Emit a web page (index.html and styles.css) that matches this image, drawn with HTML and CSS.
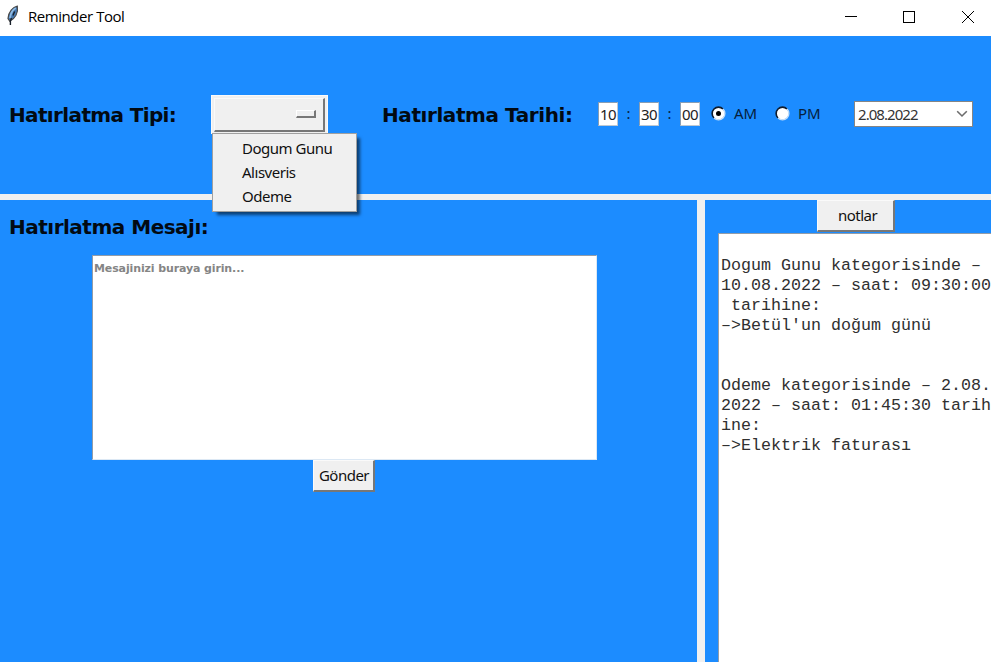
FILE: index.html
```html
<!DOCTYPE html>
<html lang="tr">
<head>
<meta charset="utf-8">
<title>Reminder Tool</title>
<link rel="stylesheet" href="styles.css">
</head>
<body>
<div class="window">
  <header class="titlebar">
    <svg class="feather" width="14" height="22" viewBox="0 0 14 22">
      <path d="M11.3 1.2C7 2 2.4 7 2 13.5L3.8 16.2C9 13.5 12.5 8 11.3 1.2Z" fill="#4678b0" stroke="#484848" stroke-width="1.2"/>
      <path d="M9.8 3C6.5 5 4.5 9 4 13" stroke="#8ebbe5" stroke-width="1.7" fill="none"/>
      <path d="M8.6 6.5L7 10.5M5.5 13L4.4 16V20" stroke="#18202a" stroke-width="1.4" fill="none"/>
    </svg>
    <span class="title">Reminder Tool</span>
    <svg class="controls" width="130" height="14" viewBox="0 0 130 14" fill="none" stroke="#000" shape-rendering="crispEdges">
      <path d="M0 6.5H12M58.5 1.5H69.5V12.5H58.5Z"/>
      <path d="M117 1L129 13M129 1L117 13" shape-rendering="auto"/>
    </svg>
  </header>
  <section class="top">
    <h2 class="type-label">Hatırlatma Tipi:</h2>
    <div class="option">
      <div class="option-button"><i class="indicator"></i></div>
      <ul class="menu"><li>Dogum Gunu</li><li>Alısveris</li><li>Odeme</li></ul>
    </div>
    <h2 class="date-label">Hatırlatma Tarihi:</h2>
    <div class="time">
      <span class="num">10</span><span class="colon">:</span><span class="num">30</span><span class="colon">:</span><span class="num">00</span>
    </div>
    <div class="radio am">
      <svg width="15" height="15" viewBox="0 0 15 15"><circle cx="7.5" cy="7.5" r="6" fill="#fff"/><path d="M3 12A6.3 6.3 0 0 1 12 3" fill="none" stroke="#101c2c" stroke-width="1.6"/><path d="M12 3A6.3 6.3 0 0 1 3 12" fill="none" stroke="#c5def8" stroke-width="1.4"/><circle cx="7.5" cy="7.5" r="2.5"/></svg>
      <span>AM</span>
    </div>
    <div class="radio pm">
      <svg width="15" height="15" viewBox="0 0 15 15"><circle cx="7.5" cy="7.5" r="6" fill="#fff"/><path d="M3 12A6.3 6.3 0 0 1 12 3" fill="none" stroke="#101c2c" stroke-width="1.6"/><path d="M12 3A6.3 6.3 0 0 1 3 12" fill="none" stroke="#c5def8" stroke-width="1.4"/></svg>
      <span>PM</span>
    </div>
    <div class="date"><span>2.08.2022</span><svg width="12" height="8" viewBox="0 0 12 8"><path d="M1.2 1.3L6 6L10.8 1.3" fill="none" stroke="#6c6c6c" stroke-width="1.6"/></svg></div>
  </section>
  <main class="bottom">
    <section class="left">
      <h2 class="msg-label">Hatırlatma Mesajı:</h2>
      <div class="message"><span>Mesajinizi buraya girin...</span></div>
      <div class="button send"><span>Gönder</span></div>
    </section>
    <section class="right">
      <div class="button notes-button"><span>notlar</span></div>
      <pre class="notes">

Dogum Gunu kategorisinde –
10.08.2022 – saat: 09:30:00
 tarihine:
–&gt;Betül'un doğum günü


Odeme kategorisinde – 2.08.
2022 – saat: 01:45:30 tarih
ine:
–&gt;Elektrik faturası</pre>
    </section>
  </main>
</div>
</body>
</html>
```
FILE: styles.css
```css
* { box-sizing: border-box; }
body { margin: 0; overflow: hidden; font: 15px/20px "Noto Sans", sans-serif; color: #101010; }
.window { width: 991px; height: 662px; display: flex; flex-direction: column; background: #f0f0f0; overflow: hidden; }
.titlebar { height: 36px; flex: none; background: #fff; display: flex; align-items: flex-start; padding: 5px 16px 0 6px; color: #000; }
.title { margin: 1px 0 0 8px; font: 15px/20px "Open Sans", sans-serif; letter-spacing: -0.45px; white-space: nowrap; }
.controls { margin: 5px 0 0 auto; }
h2 { margin: 0; font: bold 20px/26px "DejaVu Sans", sans-serif; color: #020a12; white-space: nowrap; }
.top { height: 158px; flex: none; background: #1c8cff; display: flex; align-items: flex-start; padding-left: 9px; }
.type-label { width: 202px; margin-top: 66px; letter-spacing: -0.64px; }
.option { position: relative; width: 117px; height: 39px; margin-top: 59px; background: #f0f0f0; border: 1px solid #fafafa; padding: 2px; }
.option-button { height: 34px; border: 1px solid #fafafa; border-right: 2px solid #777; border-bottom: 2px solid #777; display: flex; align-items: center; justify-content: flex-end; padding-right: 7px; }
.indicator { width: 20px; height: 8px; margin-top: -2px; border: 1px solid #fff; border-right: 2px solid #777; border-bottom: 2px solid #777; }
.menu { position: absolute; z-index: 2; left: 0; top: 37px; width: 145px; height: 79px; margin: 0; padding: 2px 0 0 29px; list-style: none; background: #f0f0f0; border: 1px solid #a0a0a0; box-shadow: 4px 4px 3px -1px rgba(0,0,0,.55); line-height: 24px; }
.menu li { width: max-content; letter-spacing: -0.48px; }
.date-label { width: 216px; margin: 66px 0 0 54px; letter-spacing: -0.42px; }
.time { display: flex; margin-top: 66px; color: #222; font-size: 15px; line-height: 22px; }
.num { width: 20px; height: 24px; background: #fff; border: 1px solid #bcc8d4; border-top-color: #879db4; border-left-color: #879db4; display: flex; justify-content: center; letter-spacing: -0.6px; }
.colon { width: 21px; text-align: center; color: #06203c; }
.radio { display: flex; margin-top: 67px; line-height: 21px; color: #06203c; }
.radio svg { margin: 3px 8px 0 0; }
.am { margin-left: 11px; width: 64px; }
.pm { width: 79px; }
.date { width: 119px; height: 26px; margin-top: 65px; background: #fff; border: 1px solid #858585; display: flex; justify-content: space-between; align-items: center; padding: 0 4px 0 3px; color: #333; letter-spacing: -0.95px; }
.bottom { height: 462px; flex: none; margin-top: 6px; display: flex; gap: 8px; }
.left { width: 697px; flex: none; background: #1c8cff; display: flex; flex-direction: column; }
.msg-label { margin: 14px 0 0 9px; letter-spacing: -0.5px; }
.message { width: 505px; height: 205px; margin: 15px 0 0 92px; background: #fff; border: 1px solid #dce8f4; border-top-color: #929ca8; border-left-color: #929ca8; padding: 5px 0 0 1px; font: bold 11px/16px "DejaVu Sans", sans-serif; letter-spacing: -0.12px; color: #858585; }
.button { background: #f0f0f0; border: 1px solid #fafafa; border-right: 2px solid #777; border-bottom: 2px solid #777; display: flex; align-items: center; justify-content: center; padding-bottom: 2px; letter-spacing: -0.5px; }
.send { width: 62px; height: 32px; margin-left: 313px; padding-left: 1px; }
.right { flex: 1; min-width: 0; background: #1c8cff; }
.notes-button { width: 78px; height: 32px; margin-left: 112px; padding-left: 4px; }
.notes { margin: 1px 0 0 13px; height: 430px; background: #fff; border: 1px solid #929ca8; border-right: 0; padding: 2px 0 0 2px; font: 16.67px/20px "Liberation Mono", monospace; color: #303030; white-space: pre; overflow: hidden; }
```
